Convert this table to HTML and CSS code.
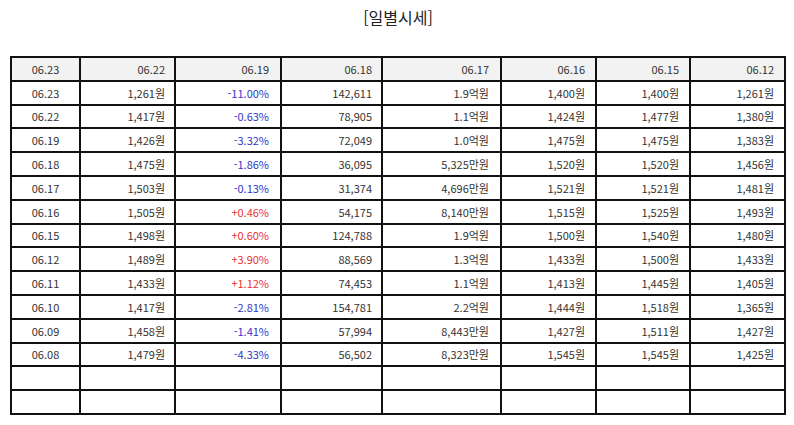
FILE: index.html
```html
<!DOCTYPE html>
<html lang="ko">
<head>
<meta charset="utf-8">
<title>일별시세</title>
<link rel="stylesheet" href="styles.css">
</head>
<body>
<div class="page">
  <div class="title">[일별시세]</div>
  <table class="grid">
    <colgroup>
      <col class="c1"><col class="c2"><col class="c3"><col class="c4"><col class="c5"><col class="c6"><col class="c7"><col class="c8">
    </colgroup>
    <thead>
      <tr class="head"><td>06.23</td><td>06.22</td><td>06.19</td><td>06.18</td><td>06.17</td><td>06.16</td><td>06.15</td><td>06.12</td></tr>
    </thead>
    <tbody>
      <tr><td>06.23</td><td>1,261원</td><td class="dn">-11.00%</td><td>142,611</td><td>1.9억원</td><td>1,400원</td><td>1,400원</td><td>1,261원</td></tr>
      <tr><td>06.22</td><td>1,417원</td><td class="dn">-0.63%</td><td>78,905</td><td>1.1억원</td><td>1,424원</td><td>1,477원</td><td>1,380원</td></tr>
      <tr><td>06.19</td><td>1,426원</td><td class="dn">-3.32%</td><td>72,049</td><td>1.0억원</td><td>1,475원</td><td>1,475원</td><td>1,383원</td></tr>
      <tr><td>06.18</td><td>1,475원</td><td class="dn">-1.86%</td><td>36,095</td><td>5,325만원</td><td>1,520원</td><td>1,520원</td><td>1,456원</td></tr>
      <tr><td>06.17</td><td>1,503원</td><td class="dn">-0.13%</td><td>31,374</td><td>4,696만원</td><td>1,521원</td><td>1,521원</td><td>1,481원</td></tr>
      <tr><td>06.16</td><td>1,505원</td><td class="up">+0.46%</td><td>54,175</td><td>8,140만원</td><td>1,515원</td><td>1,525원</td><td>1,493원</td></tr>
      <tr><td>06.15</td><td>1,498원</td><td class="up">+0.60%</td><td>124,788</td><td>1.9억원</td><td>1,500원</td><td>1,540원</td><td>1,480원</td></tr>
      <tr><td>06.12</td><td>1,489원</td><td class="up">+3.90%</td><td>88,569</td><td>1.3억원</td><td>1,433원</td><td>1,500원</td><td>1,433원</td></tr>
      <tr><td>06.11</td><td>1,433원</td><td class="up">+1.12%</td><td>74,453</td><td>1.1억원</td><td>1,413원</td><td>1,445원</td><td>1,405원</td></tr>
      <tr><td>06.10</td><td>1,417원</td><td class="dn">-2.81%</td><td>154,781</td><td>2.2억원</td><td>1,444원</td><td>1,518원</td><td>1,365원</td></tr>
      <tr><td>06.09</td><td>1,458원</td><td class="dn">-1.41%</td><td>57,994</td><td>8,443만원</td><td>1,427원</td><td>1,511원</td><td>1,427원</td></tr>
      <tr><td>06.08</td><td>1,479원</td><td class="dn">-4.33%</td><td>56,502</td><td>8,323만원</td><td>1,545원</td><td>1,545원</td><td>1,425원</td></tr>
      <tr><td></td><td></td><td></td><td></td><td></td><td></td><td></td><td></td></tr>
      <tr><td></td><td></td><td></td><td></td><td></td><td></td><td></td><td></td></tr>
    </tbody>
  </table>
</div>
</body>
</html>
```

FILE: styles.css
```css
html, body {
  margin: 0;
  padding: 0;
  background: #ffffff;
}

.page {
  font-family: "Noto Sans CJK KR", "Noto Sans", sans-serif;
  color: #333333;
  padding: 0 0 0 10px;
}

.title {
  width: 776px;
  text-align: center;
  font-size: 16px;
  line-height: 20px;
  padding-top: 7px;
  height: 56px;
  box-sizing: border-box;
  color: #222222;
}

.grid {
  width: 776px;
  table-layout: fixed;
  border-collapse: separate;
  border-spacing: 0;
  border: 1px solid #111111;
  font-size: 11px;
}

.grid col.c1 { width: 69px; }
.grid col.c2 { width: 95px; }
.grid col.c3 { width: 106px; }
.grid col.c4 { width: 101px; }
.grid col.c5 { width: 119px; }
.grid col.c6 { width: 95px; }
.grid col.c7 { width: 94px; }
.grid col.c8 { width: 95px; }

.grid td {
  border: 1px solid #111111;
  box-sizing: border-box;
  height: 23.8px;
  padding: 0 9px 0 0;
  text-align: right;
  white-space: nowrap;
  line-height: 14px;
}

.grid td:first-child {
  text-align: center;
  padding: 0;
}

.grid td:nth-child(3),
.grid td:nth-child(5) {
  padding-right: 11px;
}

.grid td:nth-child(6),
.grid td:nth-child(7),
.grid td:nth-child(8) {
  padding-right: 10px;
}

.grid .head td {
  background: #f2f2f2;
}

.grid .dn {
  color: #3434c8;
}

.grid .up {
  color: #e83232;
}
```
